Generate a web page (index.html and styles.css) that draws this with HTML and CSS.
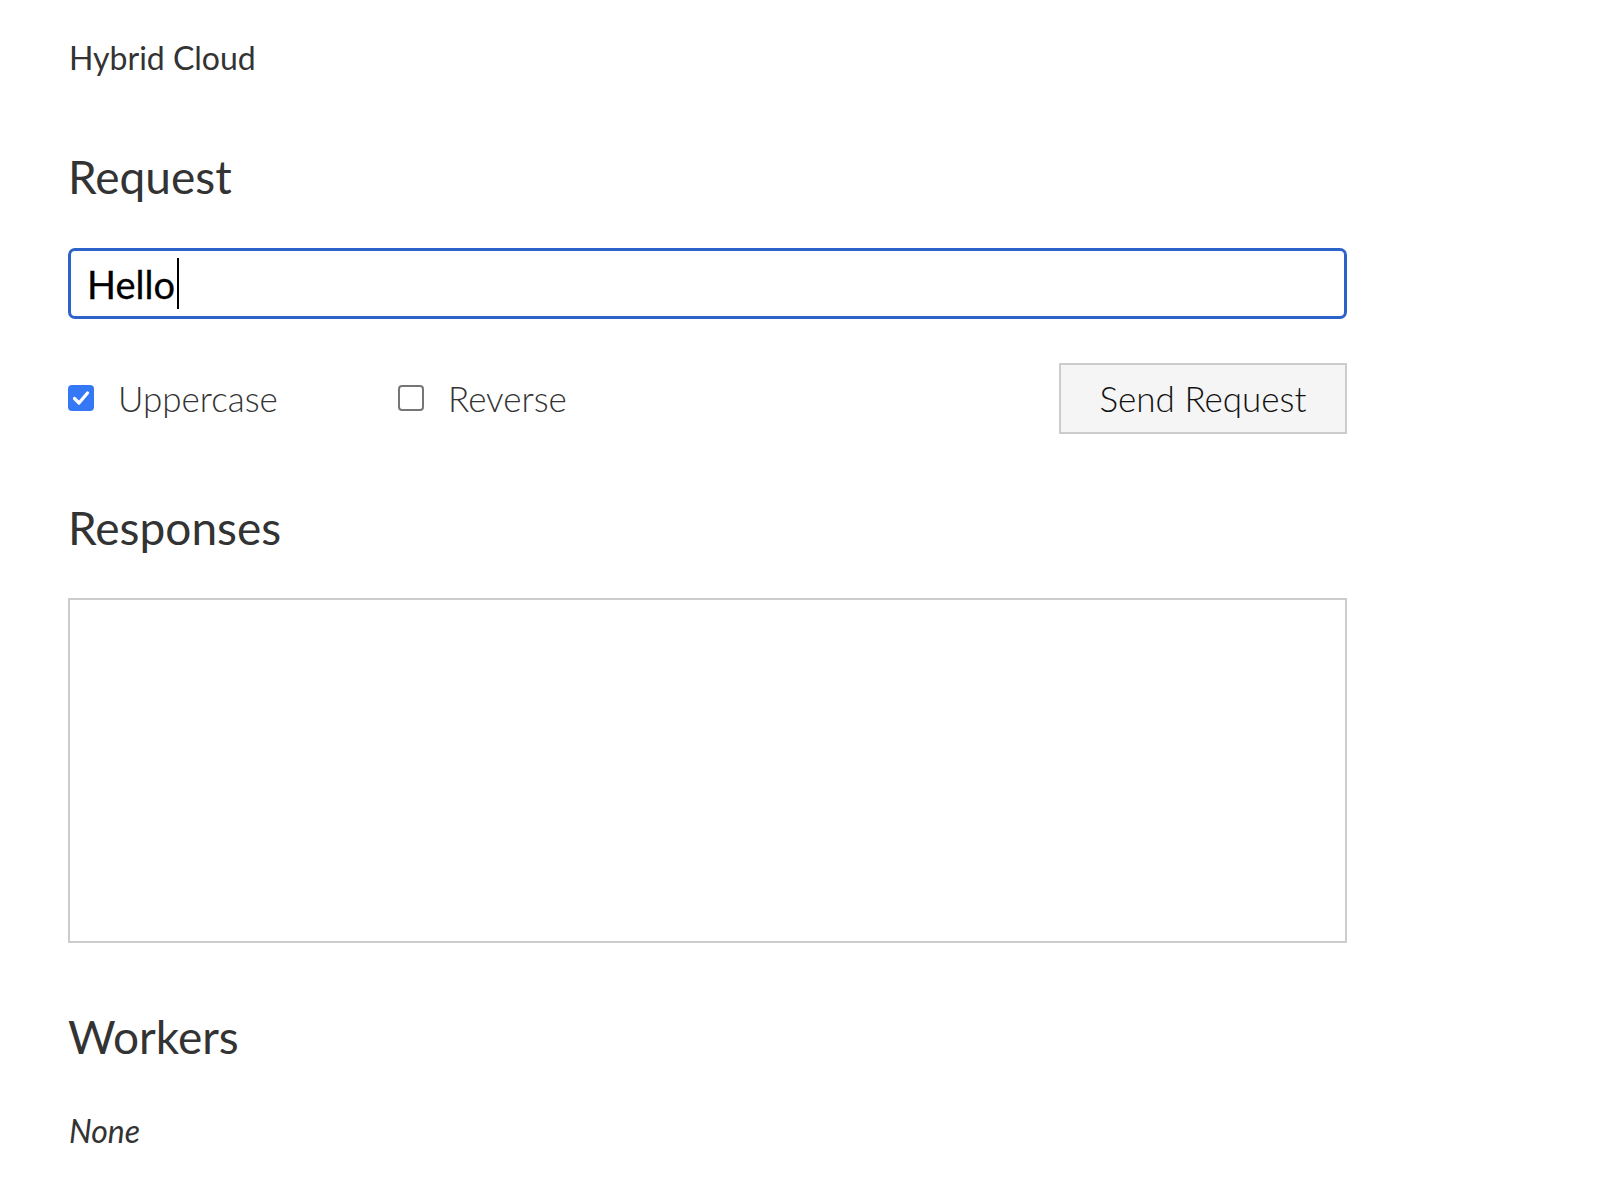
FILE: index.html
```html
<!DOCTYPE html>
<html lang="en">
<head>
<meta charset="utf-8">
<title>Hybrid Cloud</title>
<link rel="stylesheet" href="styles.css">
</head>
<body>
<main class="page">
  <div class="brand">Hybrid Cloud</div>

  <h2 class="heading heading-request">Request</h2>
  <div class="text-input"><span class="value">Hello</span><span class="caret"></span></div>

  <div class="controls">
    <label class="option option-first">
      <span class="box box-checked">
        <svg viewBox="0 0 26 26" width="26" height="26"><path d="M6.5 13.5 L11 18 L19.5 8" fill="none" stroke="#fff" stroke-width="3.2" stroke-linecap="round" stroke-linejoin="round"/></svg>
      </span>
      <span class="option-text">Uppercase</span>
    </label>
    <label class="option">
      <span class="box"></span>
      <span class="option-text">Reverse</span>
    </label>
    <button class="send" type="button">Send Request</button>
  </div>

  <h2 class="heading heading-responses">Responses</h2>
  <div class="responses"></div>

  <h2 class="heading heading-workers">Workers</h2>
  <p class="none">None</p>
</main>
</body>
</html>
```

FILE: styles.css
```css
html, body {
  margin: 0;
  padding: 0;
  background: #ffffff;
}

body {
  font-family: Lato, "Open Sans", "Liberation Sans", sans-serif;
  color: #333333;
}

.page {
  width: 1279px;
  padding: 0 0 0 68px;
  display: flex;
  flex-direction: column;
}

.brand {
  font-size: 32px;
  line-height: 40px;
  margin-top: 38px;
  padding-left: 1px;
}

.heading {
  font-size: 46px;
  line-height: 52px;
  font-weight: 400;
  margin: 0;
  padding-left: 0;
}

.heading-request { margin-top: 73px; }
.heading-responses { margin-top: 69px; }
.heading-workers { margin-top: 68px; }

.text-input {
  box-sizing: border-box;
  height: 71px;
  margin-top: 45px;
  border: 3px solid #2b63ca;
  border-radius: 7px;
  padding: 0 0 0 16px;
  display: flex;
  align-items: center;
  font-size: 38px;
  color: #000000;
}

.value {
  -webkit-text-stroke: 0.3px #000000;
}

.caret {
  display: inline-block;
  width: 2px;
  height: 51px;
  background: #000000;
  margin-left: 2px;
}

.controls {
  margin-top: 44px;
  height: 70px;
  display: flex;
  align-items: center;
}

.option {
  display: flex;
  align-items: center;
  gap: 24px;
  font-size: 35px;
  font-weight: 300;
  color: #333333;
}

.option-first {
  width: 330px;
}

.box {
  box-sizing: border-box;
  width: 26px;
  height: 26px;
  border: 2px solid #767676;
  border-radius: 4px;
  background: #ffffff;
  display: flex;
}

.box-checked {
  border: none;
  background: #3478f6;
}

.send {
  margin-left: auto;
  box-sizing: border-box;
  width: 288px;
  height: 71px;
  border: 2px solid #cccccc;
  border-radius: 0;
  background: #f5f5f5;
  font-family: Lato, "Open Sans", "Liberation Sans", sans-serif;
  font-size: 35px;
  font-weight: 300;
  color: #111111;
  padding: 0;
}

.responses {
  box-sizing: border-box;
  height: 345px;
  margin-top: 44px;
  border: 2px solid #cccccc;
  background: #ffffff;
}

.none {
  margin: 48px 0 0;
  font-size: 32px;
  line-height: 40px;
  font-style: italic;
  padding-left: 1px;
}
```
